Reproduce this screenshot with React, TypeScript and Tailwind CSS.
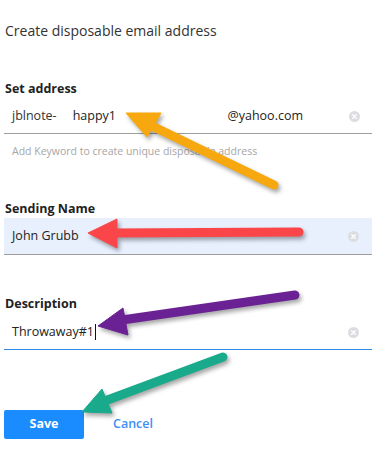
import React from "react";

function ClearIcon() {
  return (
    <svg width="11" height="11" viewBox="0 0 11 11" className="shrink-0">
      <circle cx="5.5" cy="5.5" r="5.5" fill="#dcdde0" />
      <path d="M3.7 3.7 L7.3 7.3 M7.3 3.7 L3.7 7.3" stroke="#fff" strokeWidth="1.3" strokeLinecap="round" />
    </svg>
  );
}

// annotation arrows drawn over the screenshot
function Arrows() {
  return (
    <svg
      className="absolute inset-0 pointer-events-none"
      width="391"
      height="467"
      viewBox="0 0 391 467"
      style={{ filter: "drop-shadow(2px 3px 2px rgba(0,0,0,0.35))" }}
    >
      <g fill="#f7a80f" stroke="#f7a80f">
        <line x1="150" y1="125" x2="274" y2="185" strokeWidth="9" strokeLinecap="round" />
        <polygon points="126,113 161,113 147,137" strokeWidth="1" strokeLinejoin="round" />
      </g>
      <g fill="#fa4648" stroke="#fa4648">
        <line x1="112" y1="233" x2="299" y2="232" strokeWidth="9" strokeLinecap="round" />
        <polygon points="88,233 117,219 117,248" strokeWidth="1" strokeLinejoin="round" />
      </g>
      <g fill="#6a2193" stroke="#6a2193">
        <line x1="122" y1="320" x2="295" y2="295" strokeWidth="9" strokeLinecap="round" />
        <polygon points="98,326 123,308 128,335" strokeWidth="1" strokeLinejoin="round" />
      </g>
      <g fill="#19aa8c" stroke="#19aa8c">
        <line x1="102" y1="402" x2="223" y2="357" strokeWidth="9" strokeLinecap="round" />
        <polygon points="82,412 102,389 112,413" strokeWidth="1" strokeLinejoin="round" />
      </g>
    </svg>
  );
}

export default function App() {
  return (
    <div
      className="relative w-[391px] h-[467px] bg-white overflow-hidden pl-1 pt-[21px] text-[#222]"
      style={{ fontFamily: '"Open Sans", "Noto Sans", sans-serif' }}
    >
      <div className="w-[368px]">
        <h1 className="text-[14px] leading-[20px] text-[#333] font-normal pl-[1px]">
          Create disposable email address
        </h1>

        {/* Set address */}
        <div className="mt-[39px] text-[12.5px] leading-[18px] font-bold pl-[1px]">Set address</div>
        <div className="mt-[1px] h-[35px] flex items-center border-b border-[#9e9e9e] pl-2 pr-[12px] text-[12.5px]">
          <span className="text-[#333]">jblnote-</span>
          <span className="ml-[16px] text-[#222]">happy1</span>
          <span className="ml-auto mr-[46px]">@yahoo.com</span>
          <ClearIcon />
        </div>
        <div className="mt-[10px] pl-2 text-[10.5px] leading-[14px] text-[#a6a6a6]">
          Add Keyword to create unique disposable address
        </div>

        {/* Sending Name */}
        <div className="mt-[42px] text-[12.5px] leading-[18px] font-bold pl-[1px]">Sending Name</div>
        <div className="h-[37px] flex items-center bg-[#e8f0fe] border-b border-[#9e9e9e] pl-2 pr-[13px] text-[12.5px]">
          <span>John Grubb</span>
          <span className="ml-auto">
            <ClearIcon />
          </span>
        </div>

        {/* Description */}
        <div className="mt-[40px] text-[12.5px] leading-[18px] font-bold pl-[1px]">Description</div>
        <div className="mt-[2px] h-[35px] flex items-center border-b border-[#2b8ae6] pl-2 pr-[13px] text-[12.5px]">
          <span>Throwaway#1</span>
          <span className="w-px h-[16px] bg-[#111] ml-[1px]" />
          <span className="ml-auto">
            <ClearIcon />
          </span>
        </div>

        {/* Actions */}
        <div className="mt-[60px] flex items-center">
          <button className="w-[80px] h-[29px] rounded-[2px] bg-[#1a8cff] text-white text-[12.5px] font-bold">
            Save
          </button>
          <button className="ml-[29px] text-[12.5px] font-semibold text-[#3d8ef5]">Cancel</button>
        </div>
      </div>
      <Arrows />
    </div>
  );
}
